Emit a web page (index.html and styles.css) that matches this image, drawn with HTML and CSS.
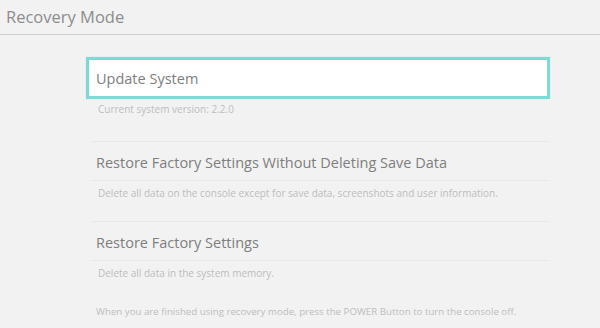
FILE: index.html
```html
<!DOCTYPE html>
<html>
<head>
<meta charset="utf-8">
<link rel="stylesheet" href="styles.css">
</head>
<body>
<header class="header"><span class="header-title">Recovery Mode</span></header>
<main class="menu">
  <section class="item item-selected">
    <div class="item-box">Update System</div>
    <div class="item-desc item-desc-first">Current system version: 2.2.0</div>
  </section>
  <section class="item">
    <div class="item-title">Restore Factory Settings Without Deleting Save Data</div>
    <div class="item-desc">Delete all data on the console except for save data, screenshots and user information.</div>
  </section>
  <section class="item">
    <div class="item-title">Restore Factory Settings</div>
    <div class="item-desc">Delete all data in the system memory.</div>
  </section>
  <p class="footer-note">When you are finished using recovery mode, press the POWER Button to turn the console off.</p>
</main>
</body>
</html>
```
FILE: styles.css
```css
html, body {
  margin: 0;
  padding: 0;
}
body {
  width: 600px;
  height: 328px;
  overflow: hidden;
  background: #f2f2f2;
  font-family: "Open Sans", "Noto Sans", sans-serif;
  color: #808080;
}
.header {
  height: 34px;
  border-bottom: 1px solid #cfcfcf;
  display: flex;
  align-items: center;
  padding-left: 6px;
}
.header-title {
  font-size: 16.5px;
  color: #8c8c8c;
  margin-top: -2px;
}
.menu {
  padding: 22px 0 0 86px;
  width: 464px;
}
.item {
  display: flex;
  flex-direction: column;
}
.item + .item {
  margin-top: 17px;
}
.item-box {
  height: 36px;
  background: #fff;
  border: 3px solid #7cdcd5;
  box-shadow: 0 0 1px #9be6df;
  display: flex;
  align-items: center;
  padding-left: 7px;
  font-size: 14.5px;
  color: #7e7e7e;
}
.item-title {
  height: 38px;
  border-top: 1px solid #e8e8e8;
  margin-left: 5px;
  padding-left: 5px;
  display: flex;
  align-items: center;
  font-size: 14.5px;
  color: #7e7e7e;
  padding-top: 2px;
  box-sizing: border-box;
  height: 39px;
}
.item-desc {
  height: 23px;
  border-top: 1px solid #e8e8e8;
  margin-left: 5px;
  padding-left: 7px;
  display: flex;
  align-items: center;
  font-size: 10px;
  color: #bdbdbd;
}
.item-desc-first {
  border-top: none;
  height: 20px;
  margin-bottom: 5px;
}
.footer-note {
  margin: 21px 0 0 10px;
  font-size: 9.7px;
  color: #bdbdbd;
}
```
